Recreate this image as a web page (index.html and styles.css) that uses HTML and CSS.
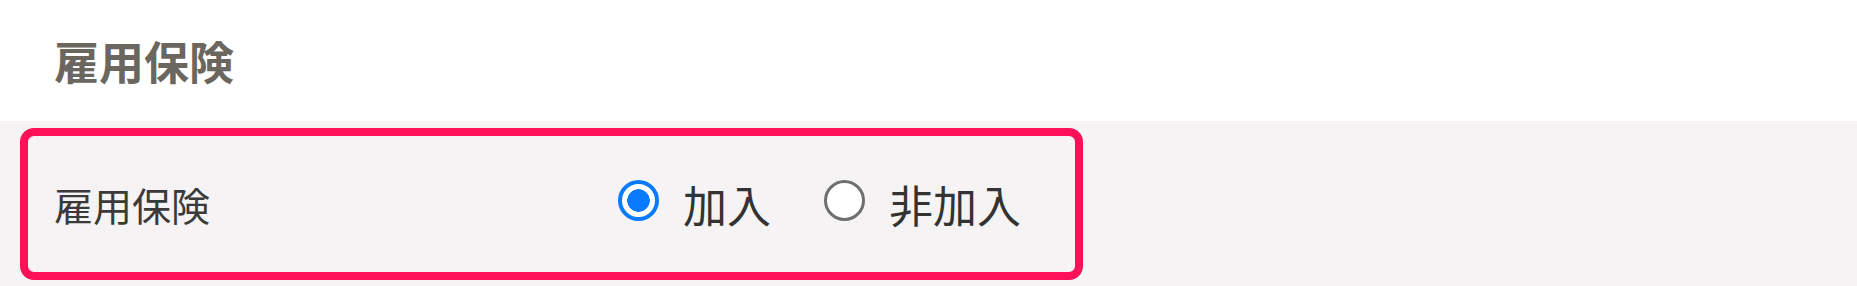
FILE: index.html
```html
<!DOCTYPE html>
<html lang="ja">
<head>
<meta charset="utf-8">
<link rel="stylesheet" href="styles.css">
</head>
<body>
  <header class="section-head">
    <h2 class="section-title">雇用保険</h2>
  </header>
  <main class="section-body">
    <div class="field-card">
      <div class="field-label">雇用保険</div>
      <div class="radio-group">
        <label class="radio-option">
          <span class="radio-mark is-checked"></span>
          <span class="radio-text">加入</span>
        </label>
        <label class="radio-option">
          <span class="radio-mark"></span>
          <span class="radio-text">非加入</span>
        </label>
      </div>
    </div>
  </main>
</body>
</html>
```

FILE: styles.css
```css
html, body {
  margin: 0;
  padding: 0;
  background: #f5f3f4;
  font-family: "Noto Sans CJK JP", "Noto Sans", sans-serif;
}

.section-head {
  height: 121px;
  background: #ffffff;
  display: flex;
  align-items: center;
  padding-left: 54px;
  box-sizing: border-box;
}

.section-title {
  margin: 0;
  font-size: 45px;
  line-height: 1;
  font-weight: 700;
  color: #6b665e;
}

.section-body {
  padding: 7px 0 0 20px;
}

.field-card {
  box-sizing: border-box;
  width: 1063px;
  height: 152px;
  border: 8px solid #ff1158;
  border-radius: 14px;
  display: flex;
  align-items: center;
  padding-left: 26px;
}

.field-label {
  width: 564px;
  font-size: 39px;
  line-height: 1;
  color: #3a3a3a;
}

.radio-group {
  display: flex;
  align-items: center;
  gap: 53px;
}

.radio-option {
  display: flex;
  align-items: center;
  gap: 24px;
}

.radio-mark {
  box-sizing: border-box;
  width: 41px;
  height: 41px;
  border-radius: 50%;
  border: 3px solid #6f6f6f;
  background: #ffffff;
  margin-top: -7px;
}

.radio-mark.is-checked {
  border: 4px solid #0a7bff;
  background: radial-gradient(circle, #0a7bff 0 11px, #ffffff 11.5px);
}

.radio-text {
  font-size: 44px;
  line-height: 1;
  color: #333333;
}
```
